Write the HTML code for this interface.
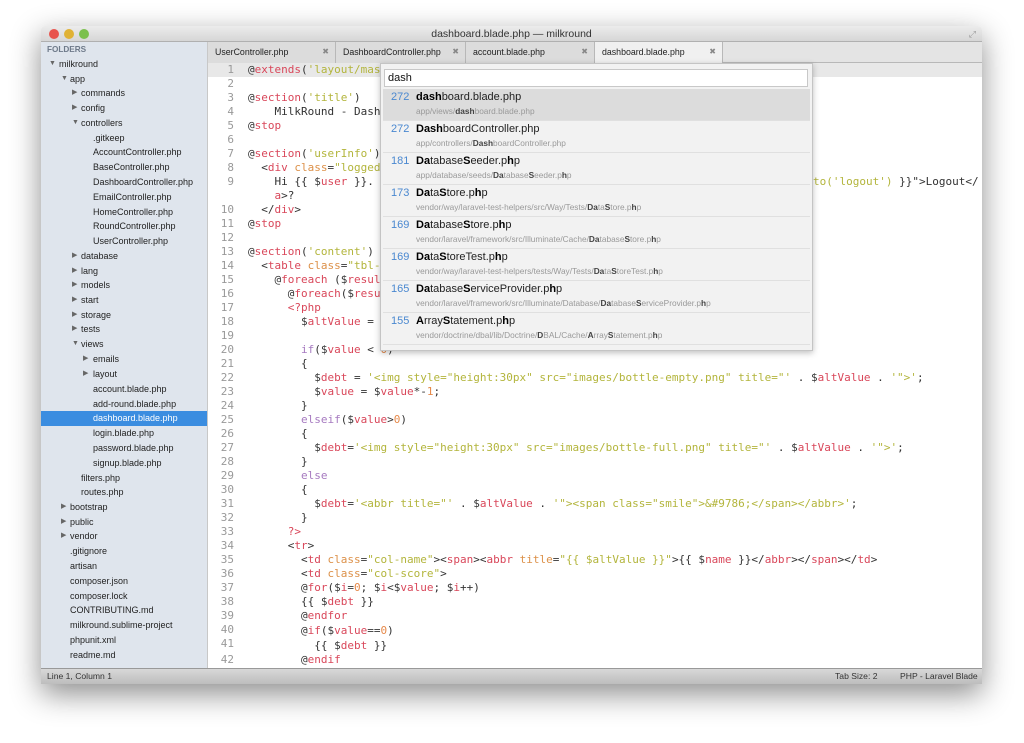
<!DOCTYPE html>
<html><head><meta charset="utf-8"><style>
*{margin:0;padding:0;box-sizing:border-box}
body{width:1024px;height:743px;background:#fff;position:relative;overflow:hidden;font-family:"Liberation Sans",sans-serif}
#win{position:absolute;left:41px;top:26px;width:941px;height:658px;background:#fff;box-shadow:0 10px 30px rgba(0,0,0,.45);border-radius:4px 4px 0 0;overflow:hidden}
#title{position:absolute;left:0;top:0;width:941px;height:16px;background:linear-gradient(#ececec,#d6d6d6);text-align:center;font-size:10.5px;color:#333;line-height:16px;border-bottom:1px solid #b0b0b0}
.dot{position:absolute;top:3px;width:10px;height:10px;border-radius:50%}
#side{position:absolute;left:0;top:16px;width:167px;height:626px;background:#dfe5ed;border-right:1px solid #c8c8c8}
.r{position:absolute;font-size:9px;color:#222;white-space:nowrap;line-height:12px}
.tri{position:absolute;font-size:7px;color:#666;line-height:12px}
#tabs{position:absolute;left:167px;top:16px;width:774px;height:21px;background:#e4e4e4;border-bottom:1px solid #b8b8b8}
.tab{position:absolute;top:0;height:21px;border-right:1px solid #b8b8b8;background:#dcdcdc;font-size:8.8px;color:#222;line-height:20px;padding-left:7px}
.tab .x{position:absolute;right:6px;top:0;color:#888;font-size:8px}
#ed{position:absolute;left:167px;top:37px;width:774px;height:605px;background:#fff;overflow:hidden;font-family:"DejaVu Sans Mono","Liberation Mono",monospace;font-size:11px;color:#333}
.ln{position:absolute;left:0;width:26px;text-align:right;color:#999;line-height:14px}
.c{position:absolute;left:40px;white-space:pre;line-height:14px}
.k{color:#d9475a}.s{color:#b3b53c}.v{color:#d9475a}.p{color:#a67ac0}.n{color:#e6894a}.a{color:#dc9048}
#pop{position:absolute;left:380px;top:63px;width:433px;height:288px;background:#f2f2f2;border:1px solid #c4c4c4;box-shadow:0 2px 6px rgba(0,0,0,.25)}
#inp{position:absolute;left:3px;top:5px;width:424px;height:18px;background:#fff;border:1px solid #c8c8c8;font-size:11px;line-height:16px;padding-left:3px;color:#111}
.it{position:absolute;left:2px;width:427px;height:32px;border-bottom:1px solid #e0e0e0}
.it .num{position:absolute;left:8px;top:1px;font-size:11px;color:#4a88d0;line-height:14px}
.it .nm{position:absolute;left:33px;top:1px;font-size:11px;color:#222;line-height:14px}
.it .pt{position:absolute;left:33px;top:17px;font-size:8.3px;color:#999;line-height:10px}
.it b{color:#000}.pt b{color:#444}
#status{position:absolute;left:0;top:642px;width:941px;height:16px;background:linear-gradient(#d8d8d8,#bdbdbd);border-top:1px solid #999;font-size:8.6px;color:#333;line-height:15px}
</style></head><body>
<div id="win">
<div id="title">dashboard.blade.php — milkround
<div class="dot" style="left:8px;background:#e8544d"></div><div class="dot" style="left:23px;background:#e0b234"></div><div class="dot" style="left:38px;background:#7bc04d"></div>
<span style="position:absolute;right:6px;top:0;color:#999;font-size:9px">⤢</span></div>
<div id="side">
<div class="r" style="left:6px;top:2px;color:#6e7a8a;font-weight:bold;font-size:8.2px">FOLDERS</div>
<div class="tri" style="left:8px;top:16px">▼</div><div class="r" style="left:18px;top:16px">milkround</div>
<div class="tri" style="left:20px;top:31px">▼</div><div class="r" style="left:29px;top:31px">app</div>
<div class="tri" style="left:31px;top:45px">▶</div><div class="r" style="left:40px;top:45px">commands</div>
<div class="tri" style="left:31px;top:60px">▶</div><div class="r" style="left:40px;top:60px">config</div>
<div class="tri" style="left:31px;top:75px">▼</div><div class="r" style="left:40px;top:75px">controllers</div>
<div class="r" style="left:52px;top:90px">.gitkeep</div>
<div class="r" style="left:52px;top:104px">AccountController.php</div>
<div class="r" style="left:52px;top:119px">BaseController.php</div>
<div class="r" style="left:52px;top:134px">DashboardController.php</div>
<div class="r" style="left:52px;top:149px">EmailController.php</div>
<div class="r" style="left:52px;top:164px">HomeController.php</div>
<div class="r" style="left:52px;top:178px">RoundController.php</div>
<div class="r" style="left:52px;top:193px">UserController.php</div>
<div class="tri" style="left:31px;top:208px">▶</div><div class="r" style="left:40px;top:208px">database</div>
<div class="tri" style="left:31px;top:223px">▶</div><div class="r" style="left:40px;top:223px">lang</div>
<div class="tri" style="left:31px;top:237px">▶</div><div class="r" style="left:40px;top:237px">models</div>
<div class="tri" style="left:31px;top:252px">▶</div><div class="r" style="left:40px;top:252px">start</div>
<div class="tri" style="left:31px;top:267px">▶</div><div class="r" style="left:40px;top:267px">storage</div>
<div class="tri" style="left:31px;top:281px">▶</div><div class="r" style="left:40px;top:281px">tests</div>
<div class="tri" style="left:31px;top:296px">▼</div><div class="r" style="left:40px;top:296px">views</div>
<div class="tri" style="left:42px;top:311px">▶</div><div class="r" style="left:52px;top:311px">emails</div>
<div class="tri" style="left:42px;top:326px">▶</div><div class="r" style="left:52px;top:326px">layout</div>
<div class="r" style="left:52px;top:341px">account.blade.php</div>
<div class="r" style="left:52px;top:356px">add-round.blade.php</div>
<div style="position:absolute;left:0;top:369px;width:166px;height:15px;background:#3b8de0"></div>
<div class="r" style="left:52px;top:370px;color:#fff">dashboard.blade.php</div>
<div class="r" style="left:52px;top:385px">login.blade.php</div>
<div class="r" style="left:52px;top:400px">password.blade.php</div>
<div class="r" style="left:52px;top:415px">signup.blade.php</div>
<div class="r" style="left:40px;top:430px">filters.php</div>
<div class="r" style="left:40px;top:444px">routes.php</div>
<div class="tri" style="left:20px;top:459px">▶</div><div class="r" style="left:29px;top:459px">bootstrap</div>
<div class="tri" style="left:20px;top:474px">▶</div><div class="r" style="left:29px;top:474px">public</div>
<div class="tri" style="left:20px;top:488px">▶</div><div class="r" style="left:29px;top:488px">vendor</div>
<div class="r" style="left:29px;top:503px">.gitignore</div>
<div class="r" style="left:29px;top:518px">artisan</div>
<div class="r" style="left:29px;top:533px">composer.json</div>
<div class="r" style="left:29px;top:548px">composer.lock</div>
<div class="r" style="left:29px;top:562px">CONTRIBUTING.md</div>
<div class="r" style="left:29px;top:577px">milkround.sublime-project</div>
<div class="r" style="left:29px;top:592px">phpunit.xml</div>
<div class="r" style="left:29px;top:607px">readme.md</div>
</div>
<div id="tabs">
<div class="tab" style="left:0;width:128px">UserController.php<span class="x">✖</span></div>
<div class="tab" style="left:128px;width:130px">DashboardController.php<span class="x">✖</span></div>
<div class="tab" style="left:258px;width:129px">account.blade.php<span class="x">✖</span></div>
<div class="tab" style="left:387px;width:128px;background:#f0f0f0;height:22px">dashboard.blade.php<span class="x">✖</span></div>
</div>
<div id="ed">
<div style="position:absolute;left:0;top:0;width:774px;height:14px;background:#e8e8e8"></div>
<div class="ln" style="top:0">1</div><div class="ln" style="top:14px">2</div><div class="ln" style="top:28px">3</div><div class="ln" style="top:42px">4</div><div class="ln" style="top:56px">5</div><div class="ln" style="top:70px">6</div><div class="ln" style="top:84px">7</div><div class="ln" style="top:98px">8</div><div class="ln" style="top:112px">9</div><div class="ln" style="top:140px">10</div><div class="ln" style="top:154px">11</div><div class="ln" style="top:168px">12</div><div class="ln" style="top:182px">13</div><div class="ln" style="top:196px">14</div><div class="ln" style="top:210px">15</div><div class="ln" style="top:224px">16</div><div class="ln" style="top:238px">17</div><div class="ln" style="top:252px">18</div><div class="ln" style="top:266px">19</div><div class="ln" style="top:280px">20</div><div class="ln" style="top:294px">21</div><div class="ln" style="top:308px">22</div><div class="ln" style="top:322px">23</div><div class="ln" style="top:336px">24</div><div class="ln" style="top:350px">25</div><div class="ln" style="top:364px">26</div><div class="ln" style="top:378px">27</div><div class="ln" style="top:392px">28</div><div class="ln" style="top:406px">29</div><div class="ln" style="top:420px">30</div><div class="ln" style="top:434px">31</div><div class="ln" style="top:448px">32</div><div class="ln" style="top:462px">33</div><div class="ln" style="top:476px">34</div><div class="ln" style="top:490px">35</div><div class="ln" style="top:504px">36</div><div class="ln" style="top:518px">37</div><div class="ln" style="top:532px">38</div><div class="ln" style="top:546px">39</div><div class="ln" style="top:560px">40</div><div class="ln" style="top:574px">41</div><div class="ln" style="top:590px">42</div>
<div class="c" style="top:0">@<span class="k">extends</span>(<span class="s">'layout/master'</span>)</div>
<div class="c" style="top:28px">@<span class="k">section</span>(<span class="s">'title'</span>)</div>
<div class="c" style="top:42px">    MilkRound - Dashboard</div>
<div class="c" style="top:56px">@<span class="k">stop</span></div>
<div class="c" style="top:84px">@<span class="k">section</span>(<span class="s">'userInfo'</span>)</div>
<div class="c" style="top:98px">  &lt;<span class="k">div</span> <span class="a">class</span>=<span class="s">"loggedIn"</span>&gt;</div>
<div class="c" style="top:112px">    Hi {{ $<span class="v">user</span> }}.</div>
<div class="c" style="top:112px;left:605px"><span class="s">to('logout')</span> }}"&gt;Logout&lt;/</div>
<div class="c" style="top:126px">    <span class="k">a</span>&gt;?</div>
<div class="c" style="top:140px">  &lt;/<span class="k">div</span>&gt;</div>
<div class="c" style="top:154px">@<span class="k">stop</span></div>
<div class="c" style="top:182px">@<span class="k">section</span>(<span class="s">'content'</span>)</div>
<div class="c" style="top:196px">  &lt;<span class="k">table</span> <span class="a">class</span>=<span class="s">"tbl-results"</span>&gt;</div>
<div class="c" style="top:210px">    @<span class="k">foreach</span> ($<span class="v">results</span>)</div>
<div class="c" style="top:224px">      @<span class="k">foreach</span>($<span class="v">results</span>)</div>
<div class="c" style="top:238px">      <span class="k">&lt;?php</span></div>
<div class="c" style="top:252px">        $<span class="v">altValue</span> = $value;</div>
<div class="c" style="top:280px">        <span class="p">if</span>($<span class="v">value</span> &lt; <span class="n">0</span>)</div>
<div class="c" style="top:294px">        {</div>
<div class="c" style="top:308px">          $<span class="v">debt</span> = <span class="s">'&lt;img style="height:30px" src="images/bottle-empty.png" title="'</span> . $<span class="v">altValue</span> . <span class="s">'"&gt;'</span>;</div>
<div class="c" style="top:322px">          $<span class="v">value</span> = $<span class="v">value</span>*-<span class="n">1</span>;</div>
<div class="c" style="top:336px">        }</div>
<div class="c" style="top:350px">        <span class="p">elseif</span>($<span class="v">value</span>&gt;<span class="n">0</span>)</div>
<div class="c" style="top:364px">        {</div>
<div class="c" style="top:378px">          $<span class="v">debt</span>=<span class="s">'&lt;img style="height:30px" src="images/bottle-full.png" title="'</span> . $<span class="v">altValue</span> . <span class="s">'"&gt;'</span>;</div>
<div class="c" style="top:392px">        }</div>
<div class="c" style="top:406px">        <span class="p">else</span></div>
<div class="c" style="top:420px">        {</div>
<div class="c" style="top:434px">          $<span class="v">debt</span>=<span class="s">'&lt;abbr title="'</span> . $<span class="v">altValue</span> . <span class="s">'"&gt;&lt;span class="smile"&gt;&amp;#9786;&lt;/span&gt;&lt;/abbr&gt;'</span>;</div>
<div class="c" style="top:448px">        }</div>
<div class="c" style="top:462px">      <span class="k">?&gt;</span></div>
<div class="c" style="top:476px">      &lt;<span class="k">tr</span>&gt;</div>
<div class="c" style="top:490px">        &lt;<span class="k">td</span> <span class="a">class</span>=<span class="s">"col-name"</span>&gt;&lt;<span class="k">span</span>&gt;&lt;<span class="k">abbr</span> <span class="a">title</span>=<span class="s">"{{ $altValue }}"</span>&gt;{{ $<span class="v">name</span> }}&lt;/<span class="k">abbr</span>&gt;&lt;/<span class="k">span</span>&gt;&lt;/<span class="k">td</span>&gt;</div>
<div class="c" style="top:504px">        &lt;<span class="k">td</span> <span class="a">class</span>=<span class="s">"col-score"</span>&gt;</div>
<div class="c" style="top:518px">        @<span class="k">for</span>($<span class="v">i</span>=<span class="n">0</span>; $<span class="v">i</span>&lt;$<span class="v">value</span>; $<span class="v">i</span>++)</div>
<div class="c" style="top:532px">        {{ $<span class="v">debt</span> }}</div>
<div class="c" style="top:546px">        @<span class="k">endfor</span></div>
<div class="c" style="top:561px">        @<span class="k">if</span>($<span class="v">value</span>==<span class="n">0</span>)</div>
<div class="c" style="top:576px">          {{ $<span class="v">debt</span> }}</div>
<div class="c" style="top:590px">        @<span class="k">endif</span></div>
</div>
<div id="status"><span style="position:absolute;left:6px">Line 1, Column 1</span><span style="position:absolute;left:794px">Tab Size: 2</span><span style="position:absolute;left:859px">PHP - Laravel Blade</span></div>
</div>
<div id="pop">
<div id="inp">dash</div>
<div class="it" style="top:25px;background:#dcdcdc"><span class="num">272</span><span class="nm"><b>dash</b>board.blade.php</span><span class="pt">app/views/<b>dash</b>board.blade.php</span></div>
<div class="it" style="top:57px"><span class="num">272</span><span class="nm"><b>Dash</b>boardController.php</span><span class="pt">app/controllers/<b>Dash</b>boardController.php</span></div>
<div class="it" style="top:89px"><span class="num">181</span><span class="nm"><b>Da</b>tabase<b>S</b>eeder.p<b>h</b>p</span><span class="pt">app/database/seeds/<b>Da</b>tabase<b>S</b>eeder.p<b>h</b>p</span></div>
<div class="it" style="top:121px"><span class="num">173</span><span class="nm"><b>Da</b>ta<b>S</b>tore.p<b>h</b>p</span><span class="pt">vendor/way/laravel-test-helpers/src/Way/Tests/<b>Da</b>ta<b>S</b>tore.p<b>h</b>p</span></div>
<div class="it" style="top:153px"><span class="num">169</span><span class="nm"><b>Da</b>tabase<b>S</b>tore.p<b>h</b>p</span><span class="pt">vendor/laravel/framework/src/Illuminate/Cache/<b>Da</b>tabase<b>S</b>tore.p<b>h</b>p</span></div>
<div class="it" style="top:185px"><span class="num">169</span><span class="nm"><b>Da</b>ta<b>S</b>toreTest.p<b>h</b>p</span><span class="pt">vendor/way/laravel-test-helpers/tests/Way/Tests/<b>Da</b>ta<b>S</b>toreTest.p<b>h</b>p</span></div>
<div class="it" style="top:217px"><span class="num">165</span><span class="nm"><b>Da</b>tabase<b>S</b>erviceProvider.p<b>h</b>p</span><span class="pt">vendor/laravel/framework/src/Illuminate/Database/<b>Da</b>tabase<b>S</b>erviceProvider.p<b>h</b>p</span></div>
<div class="it" style="top:249px"><span class="num">155</span><span class="nm"><b>A</b>rray<b>S</b>tatement.p<b>h</b>p</span><span class="pt">vendor/doctrine/dbal/lib/Doctrine/<b>D</b>BAL/Cache/<b>A</b>rray<b>S</b>tatement.p<b>h</b>p</span></div>
</div>
</body></html>
